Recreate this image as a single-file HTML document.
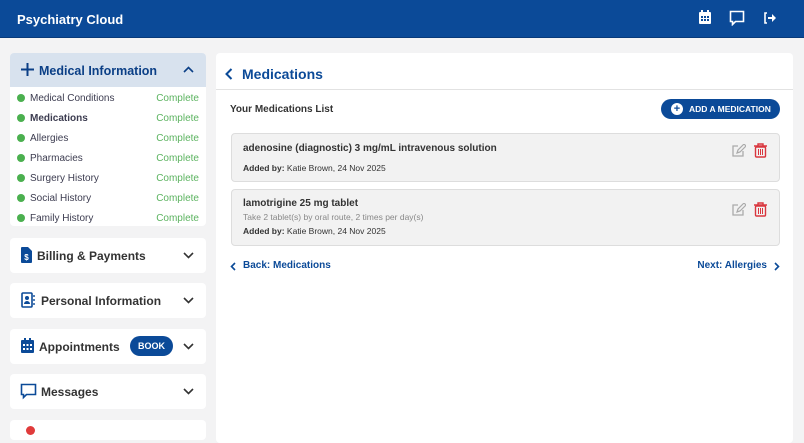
<!DOCTYPE html>
<html><head><style>
*{box-sizing:border-box;margin:0;padding:0}
body{width:804px;height:432px;overflow:hidden;background:#f3f3f4;font-family:"Liberation Sans",Arial,sans-serif;position:relative;color:#333}
.hdr{position:absolute;left:0;top:0;width:804px;height:38px;background:#0b4a98;border-bottom:1px solid #083a7a}
.hdr .t{position:absolute;left:17px;top:12px;color:#fff;font-weight:bold;font-size:13px}
.card{position:absolute;left:10px;width:196px;background:#fff;border-radius:4px}
.mi{top:53px;height:173px}
.mih{height:34px;background:#d8e2ee;border-radius:4px 4px 0 0;position:relative}
.mih span{position:absolute;left:29px;top:11px;font-size:12.5px;font-weight:bold;color:#0b3f86}
.row{position:absolute;left:0;width:196px;height:20px;font-size:10px}
.row .d{position:absolute;left:7px;top:6px;width:8px;height:8px;border-radius:50%;background:#4bb04f}
.row .n{position:absolute;left:20px;top:5px;color:#3c3c50}
.row .c{position:absolute;right:7px;top:5px;color:#5bb35f}
.sc{height:35px}
.sc .l{position:absolute;left:29px;top:11px;font-size:12px;font-weight:bold;color:#333}
.chev{position:absolute;right:12px;top:11px}
.main{position:absolute;left:216px;top:53px;width:577px;height:390px;background:#fff;border-radius:4px}
.mc{position:absolute;left:15px;width:549px;background:#f2f2f2;border:1px solid #ddd;border-radius:4px}
.mc .a{position:absolute;left:11px;font-size:10px;color:#333}
.blue{color:#0b4a98;font-weight:bold}
</style></head><body>
<div class="hdr"><div class="t">Psychiatry Cloud</div>
<svg style="position:absolute;left:698px;top:10px" width="14" height="15" viewBox="0 0 14 15"><rect x="1" y="2" width="12" height="12" rx="1" fill="#fff"/><rect x="3" y="0" width="2" height="3" fill="#fff"/><rect x="9" y="0" width="2" height="3" fill="#fff"/><g fill="#0b4a98"><rect x="3" y="6" width="2" height="2"/><rect x="6" y="6" width="2" height="2"/><rect x="9" y="6" width="2" height="2"/><rect x="3" y="9" width="2" height="2"/><rect x="6" y="9" width="2" height="2"/><rect x="9" y="9" width="2" height="2"/></g></svg>
<svg style="position:absolute;left:729px;top:10px" width="16" height="16" viewBox="0 0 16 16"><path d="M1.5 1.5h13v10h-8l-3 3v-3h-2z" fill="none" stroke="#fff" stroke-width="1.6"/></svg>
<svg style="position:absolute;left:763px;top:12px" width="13" height="12" viewBox="0 0 13 12"><path d="M4 1H2v10h2" fill="none" stroke="#fff" stroke-width="1.6"/><path d="M5 5h4V2l4 4-4 4V7H5z" fill="#fff"/></svg>
</div>

<div class="card mi"><div class="mih">
<svg style="position:absolute;left:11px;top:10px" width="13" height="13"><path d="M6.5 0v13M0 6.5h13" stroke="#0b3f86" stroke-width="2"/></svg>
<span>Medical Information</span>
<svg style="position:absolute;right:12px;top:13px" width="11" height="7"><path d="M1 6l4.5-4.5L10 6" fill="none" stroke="#0b3f86" stroke-width="1.6"/></svg></div>
<div class="row" style="top:35px"><i class="d"></i><span class="n">Medical Conditions</span><span class="c">Complete</span></div>
<div class="row" style="top:55px"><i class="d"></i><span class="n" style="font-weight:bold">Medications</span><span class="c">Complete</span></div>
<div class="row" style="top:75px"><i class="d"></i><span class="n">Allergies</span><span class="c">Complete</span></div>
<div class="row" style="top:95px"><i class="d"></i><span class="n">Pharmacies</span><span class="c">Complete</span></div>
<div class="row" style="top:115px"><i class="d"></i><span class="n">Surgery History</span><span class="c">Complete</span></div>
<div class="row" style="top:135px"><i class="d"></i><span class="n">Social History</span><span class="c">Complete</span></div>
<div class="row" style="top:155px"><i class="d"></i><span class="n">Family History</span><span class="c">Complete</span></div>
</div>

<div class="card sc" style="top:238px"><svg style="position:absolute;left:11px;top:9px" width="11" height="16"><path d="M0 1a1 1 0 011-1h6l4 4v11a1 1 0 01-1 1H1a1 1 0 01-1-1z" fill="#0b4a98"/><text x="5.5" y="13" font-size="8" fill="#fff" text-anchor="middle" font-family="Liberation Sans" font-weight="bold">$</text></svg><span class="l" style="left:27px">Billing &amp; Payments</span><svg class="chev" width="11" height="7" style="top:14px"><path d="M1 1l4.5 4.5L10 1" fill="none" stroke="#333" stroke-width="1.6"/></svg></div>
<div class="card sc" style="top:283px"><svg style="position:absolute;left:11px;top:9px" width="14" height="16"><rect x="1" y="1" width="10" height="14" rx="1" fill="none" stroke="#0b4a98" stroke-width="1.6"/><circle cx="6" cy="6" r="2" fill="#0b4a98"/><path d="M3 12a3 3 0 016 0z" fill="#0b4a98"/><path d="M13 3v2M13 7v2M13 11v2" stroke="#0b4a98" stroke-width="1.4"/></svg><span class="l" style="left:31px">Personal Information</span><svg class="chev" width="11" height="7" style="top:14px"><path d="M1 1l4.5 4.5L10 1" fill="none" stroke="#333" stroke-width="1.6"/></svg></div>
<div class="card sc" style="top:329px"><svg style="position:absolute;left:11px;top:9px" width="13" height="15"><rect x="0" y="2" width="13" height="13" rx="1" fill="#0b4a98"/><g fill="#fff"><rect x="2" y="6" width="2" height="2"/><rect x="5.5" y="6" width="2" height="2"/><rect x="9" y="6" width="2" height="2"/><rect x="2" y="10" width="2" height="2"/><rect x="5.5" y="10" width="2" height="2"/><rect x="9" y="10" width="2" height="2"/></g><rect x="3" y="0" width="2" height="3" fill="#0b4a98"/><rect x="8" y="0" width="2" height="3" fill="#0b4a98"/></svg><span class="l">Appointments</span><div style="position:absolute;left:120px;top:7px;width:43px;height:20px;border-radius:10px;background:#0b4a98;color:#fff;font-size:9px;font-weight:bold;text-align:center;line-height:20px">BOOK</div><svg class="chev" width="11" height="7" style="top:14px"><path d="M1 1l4.5 4.5L10 1" fill="none" stroke="#333" stroke-width="1.6"/></svg></div>
<div class="card sc" style="top:374px"><svg style="position:absolute;left:10px;top:9px" width="17" height="17"><path d="M1.5 1.5h14v10h-9l-3 3v-3h-2z" fill="none" stroke="#0b4a98" stroke-width="1.6"/></svg><span class="l" style="left:31px">Messages</span><svg class="chev" width="11" height="7" style="top:14px"><path d="M1 1l4.5 4.5L10 1" fill="none" stroke="#333" stroke-width="1.6"/></svg></div>
<div class="card" style="top:420px;height:20px"><div style="position:absolute;left:16px;top:6px;width:9px;height:9px;border-radius:50%;background:#e03b3b"></div></div>

<div class="main">
<svg style="position:absolute;left:9px;top:15px" width="8" height="12"><path d="M6.5 1L1.5 6l5 5" fill="none" stroke="#0b4a98" stroke-width="2"/></svg>
<div style="position:absolute;left:26px;top:13px;font-size:14px;font-weight:bold;color:#0b4a98">Medications</div>
<div style="position:absolute;left:0;top:36px;width:577px;height:1px;background:#e2e2e2"></div>
<div style="position:absolute;left:14px;top:51px;font-size:10px;font-weight:bold;color:#333">Your Medications List</div>
<div style="position:absolute;left:445px;top:46px;width:119px;height:20px;border-radius:10px;background:#0b4a98;color:#fff;font-size:8.5px;font-weight:bold;line-height:20px;padding-left:28px">ADD A MEDICATION</div>
<div style="position:absolute;left:455px;top:50px;width:12px;height:12px;border-radius:50%;background:#fff;color:#0b4a98;font-size:11px;font-weight:bold;text-align:center;line-height:12px">+</div>
<div class="mc" style="top:80px;height:49px">
<div class="a" style="top:9px;font-weight:bold">adenosine (diagnostic) 3 mg/mL intravenous solution</div>
<div class="a" style="top:29px;font-size:8.5px"><b>Added by:</b> Katie Brown, 24 Nov 2025</div>
</div>
<div class="mc" style="top:136px;height:57px">
<div class="a" style="top:8px;font-weight:bold">lamotrigine 25 mg tablet</div>
<div class="a" style="top:22px;font-size:8.5px;color:#888">Take 2 tablet(s) by oral route, 2 times per day(s)</div>
<div class="a" style="top:36px;font-size:8.5px"><b>Added by:</b> Katie Brown, 24 Nov 2025</div>
</div>
<svg style="position:absolute;left:516px;top:91px" width="14" height="14"><path d="M11 7v5H1V2h5" fill="none" stroke="#aaa" stroke-width="1.3"/><path d="M5 9l1-3 6-6 2 2-6 6z" fill="none" stroke="#aaa" stroke-width="1.2"/></svg>
<svg style="position:absolute;left:538px;top:90px" width="13" height="15"><path d="M0 3h13M4 3V1h5v2" fill="none" stroke="#d9363e" stroke-width="1.4"/><rect x="1.5" y="4" width="10" height="10" rx="1" fill="none" stroke="#d9363e" stroke-width="1.4"/><path d="M4.5 6v6M6.5 6v6M8.5 6v6" stroke="#d9363e"/></svg>
<svg style="position:absolute;left:516px;top:150px" width="14" height="14"><path d="M11 7v5H1V2h5" fill="none" stroke="#aaa" stroke-width="1.3"/><path d="M5 9l1-3 6-6 2 2-6 6z" fill="none" stroke="#aaa" stroke-width="1.2"/></svg>
<svg style="position:absolute;left:538px;top:149px" width="13" height="15"><path d="M0 3h13M4 3V1h5v2" fill="none" stroke="#d9363e" stroke-width="1.4"/><rect x="1.5" y="4" width="10" height="10" rx="1" fill="none" stroke="#d9363e" stroke-width="1.4"/><path d="M4.5 6v6M6.5 6v6M8.5 6v6" stroke="#d9363e"/></svg>
<svg style="position:absolute;left:14px;top:209px" width="6" height="9"><path d="M5 1L1.5 4.5 5 8" fill="none" stroke="#0b4a98" stroke-width="1.6"/></svg>
<div class="blue" style="position:absolute;left:27px;top:207px;font-size:10px">Back: Medications</div>
<div class="blue" style="position:absolute;right:26px;top:207px;font-size:10px">Next: Allergies</div>
<svg style="position:absolute;left:558px;top:209px" width="6" height="9"><path d="M1 1l3.5 3.5L1 8" fill="none" stroke="#0b4a98" stroke-width="1.6"/></svg>
</div>
</body></html>
